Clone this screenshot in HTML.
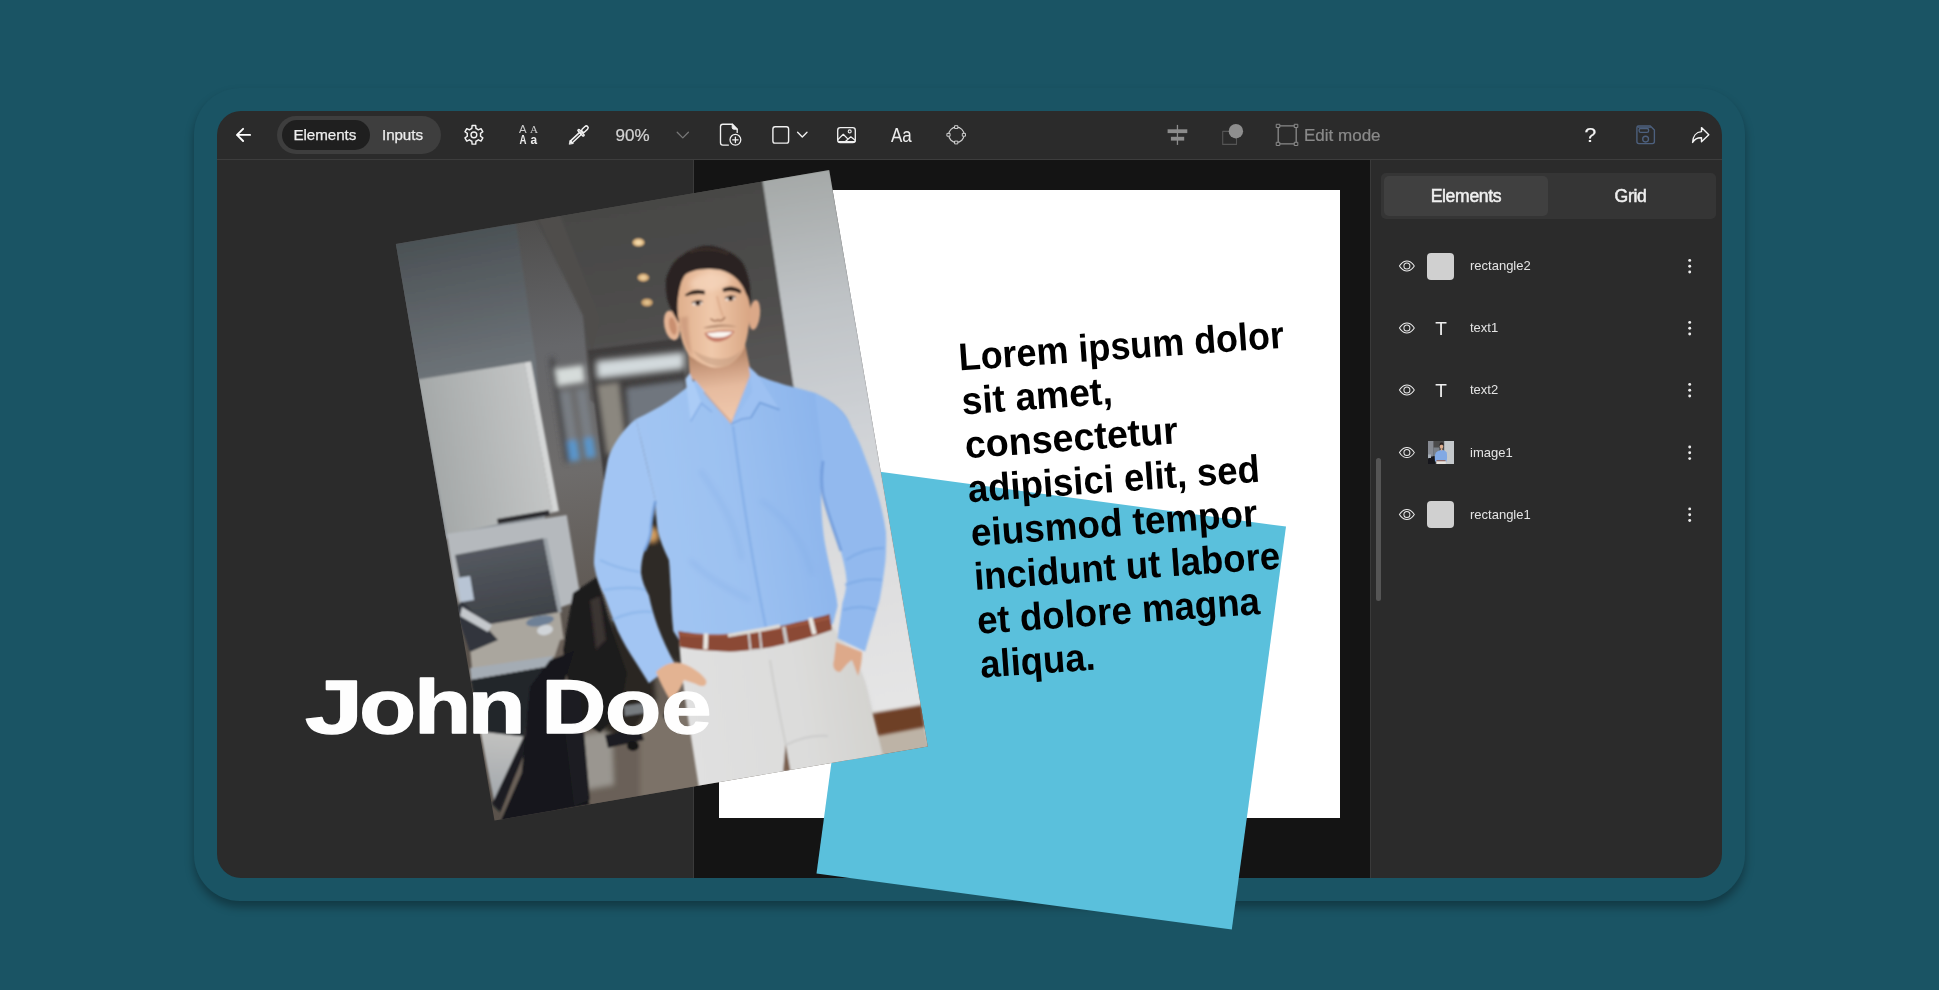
<!DOCTYPE html>
<html lang="en">
<head>
<meta charset="utf-8">
<title>Template editor</title>
<style>
*{box-sizing:border-box;margin:0;padding:0}
html,body{width:1939px;height:990px;overflow:hidden}
body{background:#1a5464;font-family:"Liberation Sans",sans-serif;position:relative;color:#e6e6e6}
.abs{position:absolute}
#frame{position:absolute;left:194px;top:88px;width:1551px;height:813px;border-radius:46px;background:#1a5464;box-shadow:0 6px 10px rgba(0,0,0,.33)}
#win{position:absolute;left:217px;top:111px;width:1505px;height:767px;border-radius:24px;background:#2b2b2b;overflow:hidden}
#toolbar{position:absolute;left:0;top:0;width:1505px;height:49px;border-bottom:1px solid #3d3d3d}
#canvasbg{position:absolute;left:477px;top:49px;width:676px;height:718px;background:#141414}
#ldiv{position:absolute;left:476px;top:49px;width:1px;height:718px;background:#3a3a3a}
#rdiv{position:absolute;left:1153px;top:49px;width:1px;height:718px;background:#3a3a3a}
#paper{position:absolute;left:502px;top:79px;width:621px;height:628px;background:#fff}
.pill{position:absolute;left:60px;top:5px;width:164px;height:37.5px;border-radius:19px;background:#3e3e3e}
.pill .on{position:absolute;left:4.5px;top:4px;width:88.5px;height:29.5px;border-radius:15px;background:#1f1f1f}
.pill span{position:absolute;top:0;height:37.5px;line-height:38.5px;font-size:15.2px;letter-spacing:-.08px;transform:translateY(.3px);color:#ededed;white-space:nowrap;-webkit-text-stroke:.25px #ededed}
.tb-text{position:absolute;white-space:nowrap}
.tb-text,.pill span,#tabs span,.row .nm,.row .tt{opacity:.999}
.tb-text{-webkit-text-stroke:.22px currentColor}
#tabs{position:absolute;left:1164px;top:62px;width:335px;height:46px;border-radius:5px;background:#353535}
#tabs .on{position:absolute;left:3px;top:3px;width:164px;height:40px;border-radius:5px;background:#404040}
#tabs span{position:absolute;top:0;height:46px;line-height:47px;font-size:17.6px;letter-spacing:-.33px;color:#f0f0f0;text-align:center;width:164px;-webkit-text-stroke:.5px #f0f0f0}
.row{position:absolute;left:1153px;width:352px;height:62px}
.row .thumb{position:absolute;left:56.8px;top:17.5px;width:27px;height:27px;border-radius:4px;background:#d0d0d0}
.row .nm{position:absolute;left:100px;top:0;height:62px;line-height:62px;transform:translateY(.3px);font-size:13px;color:#e4e4e4;white-space:nowrap}
.row .tt{position:absolute;left:57.5px;width:27px;text-align:center;top:0;height:62px;line-height:64px;font-size:19px;color:#eee}
.row svg{position:absolute}
#scroll{position:absolute;left:1159px;top:347px;width:4.5px;height:143px;border-radius:2.5px;background:#555}
#ov{position:absolute;left:0;top:0;width:1939px;height:990px;pointer-events:none}
#lorem{position:absolute;left:0;top:0;font-weight:bold;color:#000;white-space:nowrap;transform-origin:0 0}
#john{position:absolute;font-weight:bold;color:#fff;white-space:nowrap;transform-origin:0 0}
</style>
</head>
<body>
<div id="frame"></div>
<div id="win">
  <div id="canvasbg"></div>
  <div id="ldiv"></div><div id="rdiv"></div>
  <div id="paper"></div>
  <div id="toolbar">
    <div class="pill"><div class="on"></div><span style="left:16.5px">Elements</span><span style="left:105px">Inputs</span></div>
    <div class="tb-text" style="left:398.5px;top:14px;font-size:17px;line-height:22px;color:#d2d2d2">90%</div>
    <div class="tb-text" style="left:673.5px;top:12px;font-size:19.5px;line-height:24px;color:#ececec;-webkit-text-stroke:0;transform:scaleX(.87);transform-origin:0 0">Aa</div>
    <div class="tb-text" style="left:1087px;top:14px;font-size:17px;line-height:22px;color:#8a8a8a">Edit mode</div>
    <div class="tb-text" style="left:1367.5px;top:11px;font-size:21px;line-height:26px;color:#f5f5f5">?</div>
  </div>
  <div id="tabs"><div class="on"></div><span style="left:3px">Elements</span><span style="left:167.5px">Grid</span></div>
  <div id="scroll"></div>
  <div class="row" style="top:124px"><div class="thumb"></div><div class="nm">rectangle2</div></div>
  <div class="row" style="top:186px"><div class="tt">T</div><div class="nm">text1</div></div>
  <div class="row" style="top:248px"><div class="tt">T</div><div class="nm">text2</div></div>
  <div class="row" style="top:310.5px"><div class="nm">image1</div></div>
  <div class="row" style="top:372.5px"><div class="thumb"></div><div class="nm">rectangle1</div></div>
</div>
<!--OVS--><svg id="ov" width="1939" height="990" viewBox="0 0 1939 990">
<defs>
<clipPath id="pc"><polygon points="395.9,244.1 829.2,170 927.8,746.5 494.5,820.6"/></clipPath>
<filter id="b05" x="-5%" y="-5%" width="110%" height="110%"><feGaussianBlur stdDeviation=".45"/></filter>
<filter id="b1" x="-5%" y="-5%" width="110%" height="110%"><feGaussianBlur stdDeviation="1.2"/></filter>
<filter id="b2" x="-10%" y="-10%" width="120%" height="120%"><feGaussianBlur stdDeviation="2.5"/></filter>
<filter id="b3" x="-10%" y="-30%" width="120%" height="160%"><feGaussianBlur stdDeviation="3.2"/></filter>
<filter id="b4" x="-20%" y="-20%" width="140%" height="140%"><feGaussianBlur stdDeviation="5"/></filter>
<linearGradient id="gPil" gradientUnits="userSpaceOnUse" x1="540" y1="220" x2="600" y2="640"><stop offset="0" stop-color="#4f4e4d"/><stop offset=".3" stop-color="#66676a"/><stop offset=".6" stop-color="#6e6c6b"/><stop offset="1" stop-color="#5a524b"/></linearGradient>
<linearGradient id="gMon" gradientUnits="userSpaceOnUse" x1="500" y1="545" x2="515" y2="625"><stop offset="0" stop-color="#555960"/><stop offset="1" stop-color="#3d4147"/></linearGradient>
<linearGradient id="gDesk2" gradientUnits="userSpaceOnUse" x1="500" y1="733" x2="495" y2="800"><stop offset="0" stop-color="#c2c2c0"/><stop offset="1" stop-color="#a2a7ac"/></linearGradient>
<linearGradient id="gNeck" gradientUnits="userSpaceOnUse" x1="716" y1="356" x2="724" y2="420"><stop offset="0" stop-color="#b98a6c"/><stop offset=".22" stop-color="#cfa083"/><stop offset=".5" stop-color="#e6bb9f"/><stop offset="1" stop-color="#efc8ad"/></linearGradient>
<linearGradient id="gLW" gradientUnits="userSpaceOnUse" x1="440" y1="235" x2="500" y2="540"><stop offset="0" stop-color="#4b5155"/><stop offset=".45" stop-color="#6d7378"/><stop offset="1" stop-color="#8d9399"/></linearGradient>
<linearGradient id="gRW" gradientUnits="userSpaceOnUse" x1="790" y1="175" x2="890" y2="745"><stop offset="0" stop-color="#a5a9a8"/><stop offset=".22" stop-color="#bec2c5"/><stop offset=".45" stop-color="#cfd2d6"/><stop offset=".7" stop-color="#dededf"/><stop offset="1" stop-color="#e7e7e7"/></linearGradient>
<linearGradient id="gPanel" gradientUnits="userSpaceOnUse" x1="425" y1="450" x2="545" y2="430"><stop offset="0" stop-color="#a3a7a7"/><stop offset="1" stop-color="#c5c7c7"/></linearGradient>
<linearGradient id="gCeil" gradientUnits="userSpaceOnUse" x1="640" y1="200" x2="680" y2="440"><stop offset="0" stop-color="#474745"/><stop offset=".5" stop-color="#4f4e4d"/><stop offset="1" stop-color="#5d5b5c"/></linearGradient>
<linearGradient id="gShirt" gradientUnits="userSpaceOnUse" x1="620" y1="480" x2="860" y2="440"><stop offset="0" stop-color="#a3c6f3"/><stop offset=".45" stop-color="#9cc1f1"/><stop offset="1" stop-color="#86b0ea"/></linearGradient>
<linearGradient id="gPants" gradientUnits="userSpaceOnUse" x1="690" y1="700" x2="880" y2="670"><stop offset="0" stop-color="#e0e0e0"/><stop offset=".55" stop-color="#dcdcdb"/><stop offset="1" stop-color="#d2d1cd"/></linearGradient>
<linearGradient id="gSkin" gradientUnits="userSpaceOnUse" x1="680" y1="300" x2="750" y2="300"><stop offset="0" stop-color="#e0b08e"/><stop offset=".45" stop-color="#f0c9ab"/><stop offset="1" stop-color="#d9a684"/></linearGradient>
</defs>
<g id="icons" fill="none" stroke-linecap="round" stroke-linejoin="round">
<!-- back arrow -->
<path d="M250.1,134.9H237M243.1,128.8L237,134.9L243.1,141" stroke="#fff" stroke-width="1.9"/>
<!-- gear -->
<path d="M475.97,128.48L475.70,125.57 L472.10,125.57 L471.83,128.48 A6.70,6.70 0 0 0 469.42,129.87 L466.77,128.65 L464.96,131.77 L467.35,133.46 A6.70,6.70 0 0 0 467.35,136.24 L464.96,137.93 L466.77,141.05 L469.42,139.83 A6.70,6.70 0 0 0 471.83,141.22 L472.10,144.13 L475.70,144.13 L475.97,141.22 A6.70,6.70 0 0 0 478.38,139.83 L481.03,141.05 L482.84,137.93 L480.45,136.24 A6.70,6.70 0 0 0 480.45,133.46 L482.84,131.77 L481.03,128.65 L478.38,129.87 A6.70,6.70 0 0 0 475.97,128.48 Z" stroke="#f2f2f2" stroke-width="1.45" stroke-linejoin="round"/>
<circle cx="473.90" cy="134.85" r="2.9" stroke="#f2f2f2" stroke-width="1.4"/>
<!-- AA icon -->
<g fill="#f0f0f0" stroke="none" opacity=".99">
<text x="518.9" y="132.6" fill-opacity=".82" font-family="Liberation Sans, sans-serif" font-size="10.4" textLength="7.6" lengthAdjust="spacingAndGlyphs">A</text>
<text x="529.9" y="132.9" fill-opacity=".82" font-family="Liberation Serif, serif" font-size="11.2" textLength="8" lengthAdjust="spacingAndGlyphs">A</text>
<text x="519.4" y="143.9" font-family="Liberation Sans, sans-serif" font-weight="bold" font-size="12" textLength="7" lengthAdjust="spacingAndGlyphs">A</text>
<text x="530.6" y="143.9" font-family="Liberation Sans, sans-serif" font-weight="bold" font-size="12.4" textLength="6.6" lengthAdjust="spacingAndGlyphs">a</text>
</g>
<!-- eyedropper -->
<g transform="translate(569.3,143.9) rotate(-43.4)" stroke="#f2f2f2">
<path d="M0,0L3.2,-2.1V2.1Z" fill="#f2f2f2" stroke-width=".8"/>
<rect x="2.6" y="-1.3" width="12.9" height="2.6" stroke-width="1.55"/>
<rect x="15.25" y="-4.1" width="1.8" height="8.2" rx=".9" stroke-width="1.45"/>
<rect x="17.8" y="-1.85" width="7.4" height="3.7" rx="1.85" stroke-width="1.5"/>
</g>
<!-- chevron gray -->
<path d="M677.2,132.3L682.8,137.9L688.4,132.3" stroke="#777" stroke-width="1.3"/>
<!-- file plus -->
<path d="M728.4,145.1H722.8a2.3,2.3 0 0 1 -2.3,-2.3V126.6a2.3,2.3 0 0 1 2.3,-2.3H732.4L737.2,129.2V132.4" stroke="#f0f0f0" stroke-width="1.35"/>
<path d="M732.2,124.3V127.6a1.6,1.6 0 0 0 1.6,1.6H737.2Z" fill="#f0f0f0" stroke="#f0f0f0" stroke-width="1"/>
<circle cx="735.4" cy="139.8" r="5.4" stroke="#f0f0f0" stroke-width="1.25"/>
<path d="M732.7,139.8H738.1M735.4,137.1V142.5" stroke="#f0f0f0" stroke-width="1.3"/>
<!-- square + chevron -->
<rect x="772.9" y="126.7" width="15.7" height="16.4" rx="2.2" stroke="#f0f0f0" stroke-width="1.4"/>
<path d="M797.6,132.2L802.3,137L807,132.2" stroke="#f0f0f0" stroke-width="1.35"/>
<!-- image icon -->
<rect x="837.7" y="127.6" width="17.6" height="14.9" rx="2.6" stroke="#f0f0f0" stroke-width="1.35"/>
<circle cx="849.7" cy="131.4" r="1.5" stroke="#f0f0f0" stroke-width="1.1"/>
<path d="M837.9,139.6L843.3,134.3L847.5,138.6M845.4,141.5L850.8,136.8L855.2,140.2M838.5,141.6H855" stroke="#f0f0f0" stroke-width="1.25"/>
<!-- circle nodes icon -->
<circle cx="956.4" cy="134.8" r="7.7" stroke="#cdcdcd" stroke-width="1.1"/>
<g fill="#2b2b2b" stroke="#dcdcdc" stroke-width=".9">
<rect x="955" y="125.7" width="2.8" height="2.8"/><rect x="955" y="141.1" width="2.8" height="2.8"/>
<rect x="947.3" y="133.4" width="2.8" height="2.8"/><rect x="962.7" y="133.4" width="2.8" height="2.8"/>
</g>
<!-- align icon -->
<g fill="#8c8c8c" stroke="none">
<rect x="1176.8" y="124.9" width="1.3" height="20"/>
<rect x="1167.6" y="129.3" width="19.7" height="3.8"/>
<rect x="1170.9" y="136.8" width="13.3" height="3.8"/>
</g>
<!-- shape icon -->
<rect x="1222.7" y="131.4" width="13.8" height="13" stroke="#555" stroke-width="1.1"/>
<circle cx="1235.9" cy="131.2" r="7.2" fill="#8e8e8e"/>
<!-- edit mode icon -->
<rect x="1278.2" y="125.9" width="18" height="18" stroke="#8a8a8a" stroke-width="1.3"/>
<g fill="#2b2b2b" stroke="#8a8a8a" stroke-width="1">
<rect x="1276.6" y="124.3" width="3.2" height="3.2"/><rect x="1294.6" y="124.3" width="3.2" height="3.2"/>
<rect x="1276.6" y="142.3" width="3.2" height="3.2"/><rect x="1294.6" y="142.3" width="3.2" height="3.2"/>
</g>
<!-- save -->
<g stroke="#4d607e" stroke-width="1.35">
<path d="M1638.6,126H1650.3L1654.4,130.1V141.6a2,2 0 0 1 -2,2H1638.9a2,2 0 0 1 -2,-2V127.7a1.7,1.7 0 0 1 1.7,-1.7Z"/>
<path d="M1638,127.3H1650.5" stroke-width="1"/>
<rect x="1639.1" y="128.5" width="9.5" height="3.9" rx="1.6"/>
<circle cx="1645.6" cy="139.1" r="2.9"/>
</g>
<!-- share -->
<path d="M1701.5,127.6L1708.8,134.7L1701.5,141.8V137.7C1697.6,137.5 1694.6,139 1692.6,142.4C1692.8,136.2 1696.2,132 1701.5,131.6Z" stroke="#f5f5f5" stroke-width="1.4"/>
</g>
<g id="thumb" transform="translate(1428,441)">
<clipPath id="tc"><rect x="0" y="0" width="26" height="23"/></clipPath>
<g clip-path="url(#tc)" filter="url(#b05)">
<rect x="0" y="0" width="26" height="23" fill="#4b4b4b"/>
<rect x="0" y="0" width="5.4" height="23" fill="#878b93"/>
<rect x="5.4" y="6.500" width="6" height="9" fill="#7a8088"/>
<rect x="16.200" y="0" width="10" height="23" fill="#c5c9cc"/>
<path d="M1,16 L6.500,15 L7.500,23 L0,23 L0,18Z" fill="#16181c"/>
<rect x="0" y="13.500" width="3" height="3.500" fill="#a8b0b8"/>
<path d="M7,20.500 C6.500,16 7,12.500 8,11.500 C9.500,10 11,9.500 12.500,9 L15,9 C16.500,9.500 18,10.200 18.700,11.500 C19.200,14 19.200,17 18.600,20.500Z" fill="#82a9e4"/>
<path d="M8.300,19.800 L17.700,19.800 L17.700,23 L8.300,23Z" fill="#e4e2de"/>
<rect x="8.500" y="19.300" width="9" height=".9" fill="#8b4934"/>
<ellipse cx="13.500" cy="5.600" rx="1.700" ry="2.200" fill="#e0b090"/>
<path d="M11.500,4 C11.500,2 13,1.500 14,1.600 C15.300,1.800 15.800,3 15.600,4.200 C14.500,3.200 12.800,3.200 11.500,4.400Z" fill="#2a2220"/>
<rect x="12.800" y="7.500" width="1.500" height="2" fill="#dba888"/>
</g></g>
<!-- row icons -->
<g id="rowicons">
<g transform="translate(1398.9,258)" fill="#ececec"><path d="M16 8s-3-5.5-8-5.5S0 8 0 8s3 5.5 8 5.5S16 8 16 8zM1.173 8a13.133 13.133 0 0 1 1.66-2.043C4.12 4.668 5.88 3.5 8 3.500c2.12 0 3.879 1.168 5.168 2.457A13.133 13.133 0 0 1 14.828 8c-.058.087-.122.183-.195.288-.335.48-.83 1.12-1.465 1.755C11.879 11.332 10.119 12.5 8 12.500c-2.12 0-3.879-1.168-5.168-2.457A13.134 13.134 0 0 1 1.172 8z"/><path d="M8 5.500a2.500 2.500 0 1 0 0 5 2.500 2.500 0 0 0 0-5zM4.500 8a3.500 3.500 0 1 1 7 0 3.500 3.500 0 0 1-7 0z"/></g>
<circle cx="1689.7" cy="260.4" r="1.45" fill="#ececec"/>
<circle cx="1689.7" cy="266.2" r="1.45" fill="#ececec"/>
<circle cx="1689.7" cy="272.0" r="1.45" fill="#ececec"/>
<g transform="translate(1398.9,320)" fill="#ececec"><path d="M16 8s-3-5.5-8-5.5S0 8 0 8s3 5.5 8 5.5S16 8 16 8zM1.173 8a13.133 13.133 0 0 1 1.66-2.043C4.12 4.668 5.88 3.5 8 3.500c2.12 0 3.879 1.168 5.168 2.457A13.133 13.133 0 0 1 14.828 8c-.058.087-.122.183-.195.288-.335.48-.83 1.12-1.465 1.755C11.879 11.332 10.119 12.5 8 12.500c-2.12 0-3.879-1.168-5.168-2.457A13.134 13.134 0 0 1 1.172 8z"/><path d="M8 5.500a2.500 2.500 0 1 0 0 5 2.500 2.500 0 0 0 0-5zM4.500 8a3.500 3.500 0 1 1 7 0 3.500 3.500 0 0 1-7 0z"/></g>
<circle cx="1689.7" cy="322.4" r="1.45" fill="#ececec"/>
<circle cx="1689.7" cy="328.2" r="1.45" fill="#ececec"/>
<circle cx="1689.7" cy="334.0" r="1.45" fill="#ececec"/>
<g transform="translate(1398.9,382)" fill="#ececec"><path d="M16 8s-3-5.5-8-5.5S0 8 0 8s3 5.5 8 5.5S16 8 16 8zM1.173 8a13.133 13.133 0 0 1 1.66-2.043C4.12 4.668 5.88 3.5 8 3.500c2.12 0 3.879 1.168 5.168 2.457A13.133 13.133 0 0 1 14.828 8c-.058.087-.122.183-.195.288-.335.48-.83 1.12-1.465 1.755C11.879 11.332 10.119 12.5 8 12.500c-2.12 0-3.879-1.168-5.168-2.457A13.134 13.134 0 0 1 1.172 8z"/><path d="M8 5.500a2.500 2.500 0 1 0 0 5 2.500 2.500 0 0 0 0-5zM4.500 8a3.500 3.500 0 1 1 7 0 3.500 3.500 0 0 1-7 0z"/></g>
<circle cx="1689.7" cy="384.4" r="1.45" fill="#ececec"/>
<circle cx="1689.7" cy="390.2" r="1.45" fill="#ececec"/>
<circle cx="1689.7" cy="396.0" r="1.45" fill="#ececec"/>
<g transform="translate(1398.9,444.6)" fill="#ececec"><path d="M16 8s-3-5.5-8-5.5S0 8 0 8s3 5.5 8 5.5S16 8 16 8zM1.173 8a13.133 13.133 0 0 1 1.66-2.043C4.12 4.668 5.88 3.5 8 3.500c2.12 0 3.879 1.168 5.168 2.457A13.133 13.133 0 0 1 14.828 8c-.058.087-.122.183-.195.288-.335.48-.83 1.12-1.465 1.755C11.879 11.332 10.119 12.5 8 12.500c-2.12 0-3.879-1.168-5.168-2.457A13.134 13.134 0 0 1 1.172 8z"/><path d="M8 5.500a2.500 2.500 0 1 0 0 5 2.500 2.500 0 0 0 0-5zM4.500 8a3.500 3.500 0 1 1 7 0 3.500 3.500 0 0 1-7 0z"/></g>
<circle cx="1689.7" cy="447.0" r="1.45" fill="#ececec"/>
<circle cx="1689.7" cy="452.8" r="1.45" fill="#ececec"/>
<circle cx="1689.7" cy="458.6" r="1.45" fill="#ececec"/>
<g transform="translate(1398.9,506.5)" fill="#ececec"><path d="M16 8s-3-5.5-8-5.5S0 8 0 8s3 5.5 8 5.5S16 8 16 8zM1.173 8a13.133 13.133 0 0 1 1.66-2.043C4.12 4.668 5.88 3.5 8 3.500c2.12 0 3.879 1.168 5.168 2.457A13.133 13.133 0 0 1 14.828 8c-.058.087-.122.183-.195.288-.335.48-.83 1.12-1.465 1.755C11.879 11.332 10.119 12.5 8 12.500c-2.12 0-3.879-1.168-5.168-2.457A13.134 13.134 0 0 1 1.172 8z"/><path d="M8 5.500a2.500 2.500 0 1 0 0 5 2.500 2.500 0 0 0 0-5zM4.500 8a3.500 3.500 0 1 1 7 0 3.500 3.500 0 0 1-7 0z"/></g>
<circle cx="1689.7" cy="508.9" r="1.45" fill="#ececec"/>
<circle cx="1689.7" cy="514.7" r="1.45" fill="#ececec"/>
<circle cx="1689.7" cy="520.5" r="1.45" fill="#ececec"/>
</g>

<!-- blue rectangle (behind photo) -->
<polygon points="870.7,470.6 1286,526.6 1231.8,929.6 816.5,873.6" fill="#5ac0dc"/>
<g clip-path="url(#pc)">
 <rect x="390" y="165" width="545" height="660" fill="url(#gPil)"/>
 <g filter="url(#b1)">
  <!-- ceiling / back wall -->
  <polygon points="536,219 765,178 800,400 640,440 590,400 583,315" fill="url(#gCeil)"/>
  <!-- soffit diagonal -->
  <polygon points="538,219 560,215 600,318 592,352 584,318" fill="#4f4d4c"/>
  <!-- left wall -->
  <polygon points="394,243 516,223 536,361 545,520 440,540" fill="url(#gLW)"/>
  <!-- corridor -->
  <polygon points="588,350 682,338 690,470 604,480" fill="#403e3e"/>
  <polygon points="596,361 684,352 684,369 597,379" fill="#d3dadd" filter="url(#b3)"/>
  <polygon points="626,388 686,380 688,430 630,440" fill="#6f767e" filter="url(#b2)"/>
  <polygon points="597,385 619,382 627,452 607,455" fill="#8b877f" filter="url(#b2)"/>
  <!-- sconce -->
  <g filter="url(#b2)">
  <polygon points="549,358 554,357 570,462 565,463" fill="#4a4a4c"/>
  <polygon points="555,369 583,365 585,382 558,386" fill="#d6dcda"/>
  <polygon points="560,392 570,390.500 580,460 570,461.500" fill="#7d848c" opacity=".8"/>
  <polygon points="576,390 586,388.500 596,457 586,458.500" fill="#7d848c" opacity=".8"/>
  <polygon points="567,441 577,439.500 580,460 570,461.500" fill="#5a96cc"/>
  <polygon points="583,438.500 593,437 596,457 586,458.500" fill="#5a96cc"/>
  </g>
  <!-- lights -->
  <ellipse cx="638.5" cy="242.4" rx="5.8" ry="3.9" fill="#e2bb84"/><ellipse cx="638.5" cy="242.4" rx="3" ry="2" fill="#f4dcae"/>
  <ellipse cx="643.3" cy="277.6" rx="5.6" ry="3.8" fill="#d9b07a"/><ellipse cx="643.3" cy="277.6" rx="2.8" ry="1.9" fill="#eccf9e"/>
  <ellipse cx="647" cy="302.5" rx="5.5" ry="3.8" fill="#cfa671"/><ellipse cx="647" cy="302.5" rx="2.7" ry="1.8" fill="#e4c592"/>
  <!-- right wall -->
  <polygon points="762.4,180 830,169 929,746 850,760" fill="url(#gRW)"/>
  <!-- floor right & baseboard -->
  <polygon points="868,735 924,726 929,748 874,760" fill="#bdb3a6"/>
  <polygon points="868,714 922,705 925,727 872,737" fill="#6e4028" filter="url(#b1)"/>
  <polygon points="845,640 868,700 882,758 868,760 850,700" fill="#bdbdbd" opacity=".7" filter="url(#b2)"/>
  <!-- white panel -->
  <polygon points="418,379.6 524.4,362.6 552.7,512.5 446.7,535.1" fill="url(#gPanel)"/>
  <polygon points="524.4,362.6 531,361.5 559,511 552.7,512.5" fill="#d4d6d6"/>
  <!-- pillar under -->
  
  <!-- partition -->
  <polygon points="446.7,534 566.7,515 581,600 470,640 455,590" fill="#b5b9bd"/>
  <polygon points="497,519 549,510 550,515 498,524" fill="#2c2c2e"/>
  <!-- monitor -->
  <polygon points="455,555 543.3,538.3 558.3,613.3 470,630" fill="url(#gMon)"/>
  <polygon points="543.3,538.3 547,538 562,612 558.3,613.3" fill="#9aa0a6"/>
  <!-- desk surface -->
  <polygon points="468,628 560,612 566,655 472,670" fill="#aaa69e"/>
  <polygon points="462,600 498,640 470,652 455,610" fill="#33363c"/>
  <polygon points="457,578 470,576 474,600 461,602" fill="#b8c4d4"/>
  <polygon points="462,607 492,625 488,632 460,616" fill="#c4c8cc"/>
  <ellipse cx="540" cy="621" rx="14" ry="5" fill="#6e8096" transform="rotate(-10 540 621)"/>
  <ellipse cx="545" cy="630" rx="8" ry="5" fill="#d0d4d8" transform="rotate(-10 545 630)"/>
  <!-- desk edge -->
  <polygon points="470,668 553,656 551,666 471,680" fill="#a4acb4"/>
  <polygon points="471,680 551,666 545,682 474,694" fill="#24282e"/>
  <!-- floor -->
  <polygon points="560,640 700,600 700,790 500,820" fill="#6a6158"/>
  <polygon points="580,735 612,730 614,785 586,790" fill="#9a9690" filter="url(#b2)"/>
  <polygon points="640,720 700,705 700,790 640,800" fill="#7c7268" filter="url(#b2)"/>
  <!-- second desk -->
  <polygon points="471,680 551,666 532,690 524,738 480,732" fill="#22252b"/>
  <polygon points="480.400,731.500 523.300,736.600 518.300,757 494.300,802.500 487,766" fill="url(#gDesk2)"/>
  <polygon points="524,736 492,804 500,812 528,745" fill="#1c1e22"/>
  <polygon points="610,620 650,628 656,700 628,742 604,730" fill="#2b2724" filter="url(#b2)"/>
  <!-- back chair -->
  <polygon points="573,593 597,577 613,633 627,673 620,713 600,733 573,717 563,650" fill="#1d1c1d"/>
  <polygon points="590,600 600,596 606,640 596,650" fill="#3a3430" filter="url(#b1)"/>
  <polygon points="605,735 640,728 644,740 608,748" fill="#1e1e20"/>
  <ellipse cx="633" cy="746" rx="6" ry="5" fill="#141416"/>
  <ellipse cx="668" cy="716" rx="5" ry="4" fill="#1a1a1c"/>
  <polygon points="624,706 650,702 651,712 625,716" fill="#777b80"/>
  <!-- front chair -->
  <polygon points="574,651 550,660 530,687 521.7,773 500,822 590,805 568,733 563,687" fill="#16181b"/>
  <polygon points="560,690 580,686 590,800 574,806" fill="#1b1d20"/>
 </g>
 <g filter="url(#b2)"><polygon points="640,515 692,515 692,672 655,650 634,585" fill="#2f2a26"/>
 <ellipse cx="652" cy="535" rx="6" ry="7" fill="#d8a060"/></g>
 <!-- PERSON -->
 <g filter="url(#b1)">
  <!-- pants -->
  <path d="M679,640 L832,626 C850,650 866,672 869,700 L884,760 L700,795 C692,740 682,690 679,640Z" fill="url(#gPants)"/>
  <path d="M785.600,744 L790.500,771 L783,772 Z" fill="#7a6050"/>
  <path d="M770,660 C776,700 782,725 785.600,744" stroke="#c9c9c8" stroke-width="2" fill="none" opacity=".8"/>
  <path d="M786,745 C800,738 815,735 828,736" stroke="#c6c6c6" stroke-width="2" fill="none" opacity=".7"/>
  <!-- shirt torso -->
  <path d="M636,419 C660,408 680,395 697,378 L731,424 L751,372 C775,384 800,388 815,393 C835,402 846,412 851,426 L823,461 C821,478 821,495 821.4,509 C822,520 823,531 824.6,541.6 C827,555 830,568 832.7,580 C835,590 837,598 837.6,606 L833,624 L775,640 L728,645 L679,640 L673.3,631 C672,618 671,604 671,591 C670,580 670,570 668.9,560 C664,550 660,540 657.8,531 C656,520 656,510 655.5,501 Z" fill="url(#gShirt)"/>
  <path d="M700,470 C720,500 735,520 742,560 M760,500 C790,520 805,545 812,575 M690,560 C710,580 730,590 750,600" stroke="#7fa9e4" stroke-width="4" fill="none" opacity=".35" filter="url(#b2)"/>
  <!-- left arm -->
  <path d="M636,419 C622,430 612,446 608,459 C604,480 600,503 597.8,524 C596,540 594,553 594,564 C596,577 600,587 604.4,595.6 C609,608 613,620 617.8,631 C623,642 629,652 635.6,662 L648.9,683.3 L674.4,663.3 C668,651 662,638 657.8,626.7 C654,616 651,606 648.9,595.6 C645,588 642,581 641,573 C641,565 642,558 644.4,551 C648,544 650,538 651,531 C652,520 653,508 655.5,501 Z" fill="#a2c5f3"/>
  <path d="M600,560 C612,566 626,570 640,572 M604,590 C616,588 632,586 646,590 M612,620 C624,614 640,610 652,612" stroke="#86b0e8" stroke-width="2.5" fill="none" opacity=".6"/>
  <path d="M655.5,501 C652,515 651,525 651,531 C650,540 646,548 644.4,551" stroke="#6f9fe0" stroke-width="3" fill="none" opacity=".8"/>
  <!-- right arm -->
  <path d="M815,393 C828,400 838,408 844,415.6 C851,425 856,435 860.2,444.6 C866,460 872,475 876.4,490 C881,505 884,518 886,532 C886.500,542 886,552 885.400,561 C884,574 882,587 879.600,600 L865,651.500 L837.600,638.600 C839,627 841,615 842.400,603 C845,595 846.500,588 846.600,580.400 C846,570 843,560 840.800,551.300 C837,540 833,530 829.500,519 C826,508 823,497 821.400,486.700 C821,478 822,470 823,460.800 Z" fill="#92b9ee"/>
  <path d="M823,461 C821,475 821,485 823,495 C828,515 836,535 841,551" stroke="#6896d8" stroke-width="3" fill="none" opacity=".75"/>
  <path d="M846,560 C858,552 872,548 884,548 M845,585 C858,580 870,578 882,580 M843,610 C855,606 866,606 876,610" stroke="#7aa6e2" stroke-width="2.500" fill="none" opacity=".6"/>
  <!-- placket -->
  <path d="M733,426 C740,480 752,560 766,628" stroke="#82ace6" stroke-width="2.5" fill="none" opacity=".8"/>
  <!-- belt -->
  <g transform="translate(0,-1.500)">
  <path d="M678.2,632.5 C700,636 715,636.500 726.7,636 C745,634.500 760,632 772,629.500 C795,624 815,620 829.7,615.500 L832,631.500 C815,637.500 795,643.500 772,648.500 C760,650.500 745,652.500 729.7,653.200 C712,652.500 695,651.500 679.7,648.500 Z" fill="#8b4934"/>
  <path d="M680,636 C715,640 760,636 829,619.500" stroke="#a45c44" stroke-width="2.500" fill="none" opacity=".7"/>
  <rect x="749.500" y="632.500" width="11" height="19" rx="1" fill="none" stroke="#d2d2d2" stroke-width="2" transform="rotate(-6 755 642)"/>
  <rect x="783.500" y="628" width="3.500" height="18" fill="#c9c9c9" transform="rotate(-10 785 637)"/>
  <rect x="703.500" y="635" width="4.500" height="16" fill="#e9e7e2" transform="rotate(2 705 643)"/>
  <rect x="810" y="619" width="4.500" height="17" fill="#e9e7e2" transform="rotate(-14 812 627)"/>
  <path d="M728,637 C745,634 762,631.500 780,627.500" stroke="#dedcd7" stroke-width="3.500" fill="none"/>
  </g>
  <!-- hands -->
  <path d="M656,672 C664,664 674,660 684,664 C694,668 702,674 706,680 C708,686 702,688 696,684 L684,680 C680,690 676,696 670,700 C664,690 660,682 656,672Z" fill="#e3b392"/>
  <path d="M836,642 L862,652 C862,662 860,670 858,676 L852,660 C848,662 844,668 840,672 C834,672 832,666 834,660 Z" fill="#dda98a"/>
  <!-- neck -->
  <path d="M688,350 L745,343 L751,373 L731,424 L696,381 L690,378 Z" fill="url(#gNeck)"/>
  <path d="M704,392 C712,402 722,412 731,422" stroke="#c99876" stroke-width="2" fill="none" opacity=".5"/>
  <!-- collar -->
  <path d="M689.700,373.300 L685.500,379 L690.700,421.300 L701.300,403.100 L695,386 Z" fill="#abccf6"/>
  <path d="M690.700,421.300 L701.300,403.100 L712,412" stroke="#7ea8e2" stroke-width="1.600" fill="none" opacity=".8"/>
  <path d="M748.800,366.300 L757,374 L779.600,409.700 L759.900,402.600 L750.800,417.800 L731,424 L742,408 L752,392 Z" fill="#9dc1f2"/>
  <path d="M779.600,409.700 L759.900,402.600 L750.800,417.800" stroke="#6f9bd8" stroke-width="1.800" fill="none" opacity=".85"/>
  <path d="M731,424 L742,419 L750.800,417.800" stroke="#6f9bd8" stroke-width="1.500" fill="none" opacity=".8"/>
  <!-- ears -->
  <ellipse cx="671.8" cy="325.5" rx="7.5" ry="15" fill="#e4b494" transform="rotate(-12 671.8 325.5)"/>
  <ellipse cx="672.8" cy="326" rx="3.5" ry="9" fill="#c98f70" transform="rotate(-12 672.8 326)"/>
  <ellipse cx="754.5" cy="314.9" rx="5.5" ry="15" fill="#dba888" transform="rotate(6 754.5 314.9)"/>
  <!-- face -->
  <path d="M677,300 C676,280 684,266 700,264 C712,262 724,264 734,270 C744,278 749,292 750.3,306 C750,318 749,326 748,332 C746,344 743,352 739.7,355.2 C735,361 730,365 724.9,366.5 C719,368 713,368 707.9,366 C700,363 694,359 688.8,355.2 C684,347 681,339 680.3,331.9 C678,320 677,310 677,300Z" fill="url(#gSkin)"/>
  <ellipse cx="710" cy="282" rx="20" ry="9" fill="#f6d6bd" opacity=".7" transform="rotate(-8 710 282)" filter="url(#b2)"/>
  <path d="M680,318 C682,335 686,348 692,356 C690,344 688,330 688,316Z" fill="#c9977a" opacity=".7" filter="url(#b1)"/>
  <!-- beard shadow -->
  <path d="M693,350 C700,362 712,367.500 724,366.500 C732,364 738,358 742,349 C737,355 730,358 724,358.500 C712,359.500 702,356 693,350Z" fill="#c39a80" opacity=".55"/>
  <path d="M703,328 C712,324.500 724,323 737,327 C730,326 722,326.500 716,327.500 C711,328 707,328.500 703,328Z" fill="#a97e64" opacity=".8"/>
  <!-- hair -->
  <path d="M679,323 C672,312 666,300 666.500,293 C665,284 666,276 668.600,272 C672,264 676,259 682.400,255.500 C690,250 696,247 703.700,246 C712,245 718,247 725,250 C732,253 738,257 742,262 C746,268 748,276 749.500,283 C750.500,292 751,300 750.300,307 C749,300 748,297 746,293.700 C744,288 741,283 737.300,279.500 C732,274.500 727,271.500 720.600,270 C714,269 706,268.500 699.400,269.500 C694,270.500 689,272 685.500,274.500 C683,277.500 681.500,281 680.500,285 C679,290 678,297 677.500,304 C677,310 678,316 679,323Z" fill="#2a2220"/>
  <path d="M690,252 C700,248 715,248 728,254" stroke="#4a3c36" stroke-width="2" fill="none" opacity=".6"/>
  <!-- brows & eyes -->
  <path d="M685.500,295.500 C690,291.500 697,289.500 704,291.500 L704,293.500 C697,292.500 691,293.500 685.500,295.500Z" fill="#2e211c" stroke="#2e211c" stroke-width="1.700"/>
  <path d="M723.500,289 C729,286.500 735,287 740.500,291 L740,292.500 C735,290 729,289.500 723.800,291Z" fill="#2e211c" stroke="#2e211c" stroke-width="1.700"/>
  <ellipse cx="697.300" cy="303.200" rx="5.400" ry="2.700" fill="#f1e2d8" transform="rotate(-8 697.300 303.200)"/>
  <ellipse cx="730.200" cy="298.300" rx="5.400" ry="2.700" fill="#f1e2d8" transform="rotate(-8 730.200 298.300)"/>
  <circle cx="697.800" cy="303" r="2.600" fill="#33211a"/>
  <circle cx="730.600" cy="298.200" r="2.600" fill="#33211a"/>
  <path d="M692,303 C695,300.300 700,300 702.800,302" stroke="#3a2a22" stroke-width="1.200" fill="none"/>
  <path d="M725,298.300 C728,295.600 733,295.300 735.600,297.300" stroke="#3a2a22" stroke-width="1.200" fill="none"/>
  <!-- nose -->
  <path d="M717,296 C719,305 721,312 723,316" stroke="#d9a888" stroke-width="2" fill="none" opacity=".8"/>
  <path d="M710.500,318.500 C713,321.500 716,321 718,320 C720,321.500 723,320.500 725,317" stroke="#a8775c" stroke-width="1.800" fill="none"/>
  <!-- mouth -->
  <path d="M704.500,333 C712,330.500 724,329.500 734.500,331 C731,338.500 723,341.800 716,341.800 C710,341 706,337.800 704.500,333Z" fill="#c57a67"/>
  <path d="M706.500,333.400 C714,331.800 724,331.200 732.500,332 C728.500,336.600 722,337.800 716,337.600 C711.500,337.200 708.500,335.600 706.500,333.400Z" fill="#faf6f1"/>
 </g>
</g>
<text y="732.7" font-family="Liberation Sans, sans-serif" font-weight="bold" font-size="76.0" fill="#fff" stroke="#fff" stroke-width="1.4" stroke-linejoin="round" opacity=".995"><tspan x="305.03" textLength="58.32" lengthAdjust="spacingAndGlyphs">J</tspan><tspan x="359.37" textLength="56.84" lengthAdjust="spacingAndGlyphs">o</tspan><tspan x="413.94" textLength="57.25" lengthAdjust="spacingAndGlyphs">h</tspan><tspan x="467.61" textLength="58.17" lengthAdjust="spacingAndGlyphs">n</tspan><tspan x="530"> </tspan><tspan x="541.40" textLength="64.68" lengthAdjust="spacingAndGlyphs">D</tspan><tspan x="605.01" textLength="56.27" lengthAdjust="spacingAndGlyphs">o</tspan><tspan x="661.37" textLength="50.32" lengthAdjust="spacingAndGlyphs">e</tspan></text>
<g transform="translate(959.5,370.5) rotate(-4.02)" font-family="Liberation Sans, sans-serif" font-weight="bold" font-size="38.6" fill="#000" opacity=".995">
<text x="0" y="0" textLength="326" lengthAdjust="spacingAndGlyphs">Lorem ipsum dolor</text>
<text x="0" y="44" textLength="151" lengthAdjust="spacingAndGlyphs">sit amet,</text>
<text x="0" y="88" textLength="213.5" lengthAdjust="spacingAndGlyphs">consectetur</text>
<text x="0" y="132" textLength="292.5" lengthAdjust="spacingAndGlyphs">adipisici elit, sed</text>
<text x="0" y="176" textLength="287" lengthAdjust="spacingAndGlyphs">eiusmod tempor</text>
<text x="0" y="220" textLength="306.7" lengthAdjust="spacingAndGlyphs">incidunt ut labore</text>
<text x="0" y="264" textLength="283.3" lengthAdjust="spacingAndGlyphs">et dolore magna</text>
<text x="0" y="308" textLength="115.4" lengthAdjust="spacingAndGlyphs">aliqua.</text>
</g>

</svg>
<!--OVE-->
</body>
</html>
